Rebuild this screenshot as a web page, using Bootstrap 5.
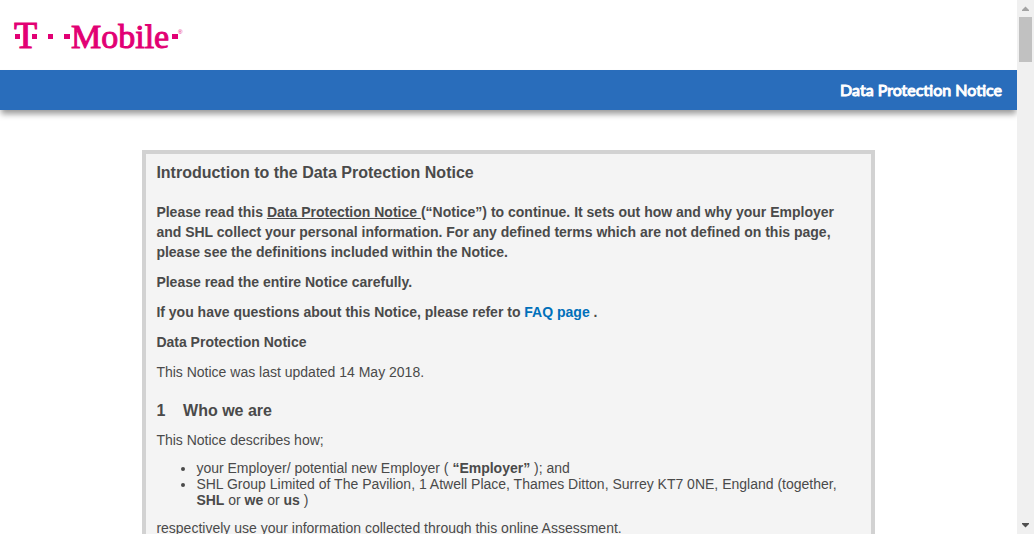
<!DOCTYPE html>
<html lang="en">
<head>
<meta charset="utf-8">
<meta name="viewport" content="width=device-width, initial-scale=1">
<title>Data Protection Notice</title>
<link href="https://cdn.jsdelivr.net/npm/bootstrap@5.3.0/dist/css/bootstrap.min.css" rel="stylesheet">
<style>
body { font: 14px/20px "Liberation Sans", Arial, sans-serif; color: #4a4a4a; background: #fff; }
.brand-row { height: 70px; padding: 0 14px; }
.logo { width: 170px; height: 40px; display: block; overflow: visible; }
.title-bar { height: 40px; padding: 0 15px; background: #296dbb; box-shadow: 0 5px 6px -1px rgba(0,0,0,.4); }
.title-bar h1 { font: 400 16px/20px Lato, sans-serif; color: #fff; -webkit-text-stroke: 1px #fff; }
.notice { width: 72%; margin: 40px auto; padding: 8px 10px; background: #f4f4f4; border: 4px solid #d2d2d2; }
.notice h2 { font-size: 16px; line-height: 22px; font-weight: 700; margin: 0 0 18px; }
.notice h3 { font-size: 16px; line-height: 22px; font-weight: 700; margin: 18px 0 8px; }
.notice p { margin: 0 0 10px; }
.notice ul { line-height: 16px; margin: 0 0 10px; padding-left: 40px; }
.notice b, .notice .fw-bold { font-weight: 700 !important; }
.notice .term { color: inherit; }
.notice .faq { color: #0070ba; text-decoration: none; }
.scroll-track { width: 17px; background: #f0f0f0; }
.scroll-track button { width: 17px; height: 17px; line-height: 0; }
.scroll-track svg { display: block; }
.scroll-thumb { width: 13px; height: 45px; background: #c1c1c1; }
</style>
</head>
<body>
<div class="d-flex vh-100 overflow-hidden">
  <div class="flex-grow-1 overflow-hidden">
    <header>
      <div class="brand-row d-flex align-items-center">
        <svg class="logo" viewBox="14 15 170 40" fill="#e20074" role="img" aria-label="T-Mobile" font-family="Liberation Serif, serif">
          <text x="14" y="48" font-size="38" stroke="#e20074" stroke-width="1">T</text>
          <path d="M15 34h5v5h-5zM32 34h5v5h-5zM48 34h5v5h-5zM64 34h6v5h-6zM172 34h6v5h-6z"/>
          <text x="71" y="48" font-size="34" stroke="#e20074" stroke-width="1">Mobile</text>
          <text x="178" y="34" font-size="6" font-family="Liberation Sans, sans-serif">®</text>
        </svg>
      </div>
      <div class="title-bar d-flex align-items-center justify-content-end"><h1 class="m-0">Data Protection Notice</h1></div>
    </header>
    <main class="notice">
      <h2>Introduction to the Data Protection Notice</h2>
      <p class="fw-bold">Please read this <a class="term" href="#notice">Data Protection Notice </a>(“Notice”) to continue. It sets out how and why your Employer and SHL collect your personal information. For any defined terms which are not defined on this page, please see the definitions included within the Notice.</p>
      <p class="fw-bold">Please read the entire Notice carefully.</p>
      <p class="fw-bold">If you have questions about this Notice, please refer to <a class="faq" href="#faq">FAQ page</a> .</p>
      <p class="fw-bold" id="notice">Data Protection Notice</p>
      <p>This Notice was last updated 14 May 2018.</p>
      <h3>1&nbsp;&nbsp;&nbsp;&nbsp;Who we are</h3>
      <p>This Notice describes how;</p>
      <ul>
        <li>your Employer/ potential new Employer ( <b>“Employer”</b> ); and</li>
        <li>SHL Group Limited of The Pavilion, 1 Atwell Place, Thames Ditton, Surrey KT7 0NE, England (together, <b>SHL</b> or <b>we</b> or <b>us</b> )</li>
      </ul>
      <p>respectively use your information collected through this online Assessment.</p>
    </main>
  </div>
  <div class="scroll-track d-flex flex-column align-items-center flex-shrink-0">
    <button type="button" class="border-0 bg-transparent p-0" aria-label="Scroll up"><svg width="17" height="17" viewBox="0 0 17 17" fill="#a3a3a3"><path d="M5 11V10l3.500-3.500L12 10v1z"/></svg></button>
    <div class="scroll-thumb"></div>
    <button type="button" class="border-0 bg-transparent p-0 mt-auto" aria-label="Scroll down"><svg width="17" height="17" viewBox="0 0 17 17" fill="#505050"><path d="M5 6h7v1l-3.500 3.500L5 7z"/></svg></button>
  </div>
</div>
<script src="https://cdn.jsdelivr.net/npm/bootstrap@5.3.0/dist/js/bootstrap.bundle.min.js"></script>
</body>
</html>
